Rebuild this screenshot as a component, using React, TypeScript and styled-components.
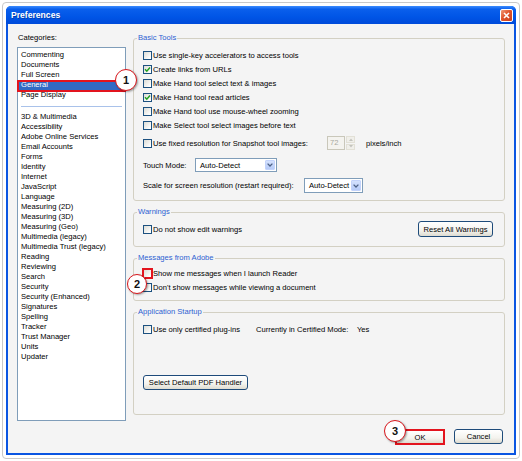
import React from "react";
import styled, { createGlobalStyle } from "styled-components";

const GlobalStyle = createGlobalStyle`
  html, body { margin: 0; padding: 0; background: #ffffff; }
  body {
    font-family: "Liberation Sans", Arial, sans-serif;
    font-size: 7.6px;
    color: #000;
  }
  * { box-sizing: border-box; }
`;

const Outer = styled.div`
  margin: 2px;
  width: 518px;
  height: 457px;
  border: 1px solid #c9c9c9;
  border-radius: 4px;
  padding: 3px;
`;

const Window = styled.div`
  width: 510px;
  height: 449px;
  display: flex;
  flex-direction: column;
  background: #0a55e2;
  border-radius: 5px 5px 0 0;
  overflow: hidden;
`;

const TitleBar = styled.div`
  height: 18px;
  flex: none;
  display: flex;
  align-items: center;
  justify-content: space-between;
  padding: 0 3px 0 5px;
  background: linear-gradient(#3b8cff 0%, #0a5fec 18%, #0055e6 60%, #004bda 100%);
  color: #fff;
  font-weight: bold;
  font-size: 8.6px;
  text-shadow: 1px 1px 0 rgba(0, 0, 0, 0.25);
`;

const CloseButton = styled.div`
  width: 13px;
  height: 13px;
  border: 1px solid #fff;
  border-radius: 2px;
  background: linear-gradient(135deg, #f09a7a 0%, #e0542c 45%, #c8401f 100%);
  display: flex;
  align-items: center;
  justify-content: center;
`;

const Body = styled.div`
  flex: 1;
  margin: 0 2px 2px;
  background: #f4f4f4;
  padding: 9px 9px 0;
  display: flex;
  flex-direction: column;
  position: relative;
`;

const Main = styled.div`
  height: 388px;
  display: flex;
  gap: 7px;
`;

const LeftCol = styled.div`
  width: 109px;
  display: flex;
  flex-direction: column;
`;

const Caption = styled.div`
  height: 10px;
  line-height: 10px;
  padding-left: 1px;
`;

const List = styled.div`
  margin-top: 4px;
  flex: 1;
  border: 1px solid #7f9db9;
  background: #fff;
  padding-top: 2px;
`;

const Item = styled.div<{ $selected?: boolean }>`
  position: relative;
  height: 10px;
  line-height: 10px;
  padding-left: 3px;
  white-space: nowrap;
  background: ${(p) => (p.$selected ? "#316ac5" : "transparent")};
  color: ${(p) => (p.$selected ? "#fff" : "#000")};
`;

const ItemMark = styled.span`
  position: absolute;
  top: 0;
  left: -1px;
  right: -1px;
  bottom: -2px;
  border: 2px solid #e3141e;
`;

const Separator = styled.div`
  height: 12px;
  display: flex;
  align-items: center;
  padding: 0 3px;
  &::after {
    content: "";
    flex: 1;
    height: 1px;
    background: #a9c2ea;
  }
`;

const RightCol = styled.div`
  flex: 1;
  display: flex;
  flex-direction: column;
  gap: 11px;
  padding-top: 5px;
`;

const Group = styled.div<{ $h: number; $pad: string }>`
  position: relative;
  height: ${(p) => p.$h}px;
  border: 1px solid #d3d0c3;
  border-radius: 3px;
  padding: ${(p) => p.$pad};
  display: flex;
  flex-direction: column;
`;

const Legend = styled.span`
  position: absolute;
  top: -6px;
  left: 3px;
  padding: 0 1px;
  line-height: 10px;
  background: #f4f4f4;
  color: #2c5fd2;
`;

const Row = styled.div<{ $h?: number; $mt?: number }>`
  display: flex;
  align-items: center;
  height: ${(p) => p.$h ?? 14}px;
  margin-top: ${(p) => p.$mt ?? 0}px;
  white-space: nowrap;
`;

const SpreadRow = styled(Row)`
  justify-content: space-between;
`;

const Box = styled.span<{ $mark?: boolean }>`
  width: 9px;
  height: 9px;
  flex: none;
  margin-right: 1px;
  border: 1px solid ${(p) => (p.$mark ? "#e3141e" : "#1c5180")};
  outline: ${(p) => (p.$mark ? "1px solid #e3141e" : "none")};
  background: linear-gradient(135deg, #dcdcd5 0%, #fff 90%);
  display: flex;
  align-items: center;
  justify-content: center;
`;

const FixedLabel = styled.span<{ $w: number }>`
  width: ${(p) => p.$w}px;
  flex: none;
`;

const NumBox = styled.div`
  width: 18px;
  height: 14px;
  border: 1px solid #c9c7ba;
  background: #f4f3ef;
  color: #a8a8a0;
  padding-left: 2px;
  line-height: 12px;
`;

const Spinner = styled.div`
  width: 9px;
  height: 14px;
  display: flex;
  flex-direction: column;
  gap: 1px;
  margin-left: 1px;
`;

const SpinHalf = styled.div`
  flex: 1;
  background: #f0efea;
  border: 1px solid #e2e0d6;
  display: flex;
  align-items: center;
  justify-content: center;
`;

const Unit = styled.span`
  margin-left: 11px;
`;

const Select = styled.div<{ $w: number; $h?: number }>`
  width: ${(p) => p.$w}px;
  height: ${(p) => p.$h ?? 14}px;
  border: 1px solid #7f9db9;
  background: #fff;
  display: flex;
  align-items: center;
  padding: 1px;
`;

const SelectText = styled.span`
  flex: 1;
  padding-left: 3px;
`;

const DropButton = styled.span`
  width: 10px;
  height: 100%;
  border-radius: 1px;
  background: linear-gradient(#d4e1fd, #b6cbf8);
  border: 1px solid #c3d3fb;
  display: flex;
  align-items: center;
  justify-content: center;
`;

const Button = styled.div<{ $w: number; $h?: number; $mark?: boolean }>`
  width: ${(p) => p.$w}px;
  height: ${(p) => p.$h ?? 15}px;
  flex: none;
  display: flex;
  align-items: center;
  justify-content: center;
  border: ${(p) => (p.$mark ? "2px solid #e3141e" : "1px solid #1e4b7a")};
  border-radius: ${(p) => (p.$mark ? "0" : "3px")};
  background: linear-gradient(#ffffff 0%, #f4f3ee 60%, #dedbd0 100%);
  white-space: nowrap;
`;

const PushBottom = styled.div`
  margin-top: auto;
`;

const Footer = styled.div`
  margin-top: 8px;
  display: flex;
  justify-content: flex-end;
  gap: 9px;
  padding-right: 2px;
`;

const Badge = styled.div<{ $x: number; $y: number; $s: number }>`
  position: absolute;
  left: ${(p) => p.$x}px;
  top: ${(p) => p.$y}px;
  width: ${(p) => p.$s}px;
  height: ${(p) => p.$s}px;
  border-radius: 50%;
  border: 1.5px solid #d9151b;
  background: #fff;
  box-shadow: 1px 1px 2px rgba(0, 0, 0, 0.35);
  display: flex;
  align-items: center;
  justify-content: center;
  font-family: "Liberation Sans", Arial, sans-serif;
  font-weight: bold;
  font-size: 11px;
  color: #111;
`;

const Check = () => (
  <svg width="7" height="7" viewBox="0 0 7 7">
    <path d="M1 3.2 L2.8 5.2 L6 1.4" fill="none" stroke="#21a121" strokeWidth="1.5" />
  </svg>
);

const Chevron = () => (
  <svg width="6" height="4" viewBox="0 0 6 4">
    <path d="M0.6 0.6 L3 3 L5.4 0.6" fill="none" stroke="#4d6185" strokeWidth="1.3" />
  </svg>
);

const Tri = ({ up }: { up?: boolean }) => (
  <svg width="4" height="3" viewBox="0 0 4 3">
    <path d={up ? "M0 3 L2 0.6 L4 3 Z" : "M0 0 L2 2.4 L4 0 Z"} fill="#c3c3bd" />
  </svg>
);

const CheckItem = ({ label, checked, mark }: { label: string; checked?: boolean; mark?: boolean }) => (
  <Row>
    <Box $mark={mark}>{checked && <Check />}</Box>
    <span>{label}</span>
  </Row>
);

const topItems = ["Commenting", "Documents", "Full Screen", "General", "Page Display"];
const moreItems = [
  "3D & Multimedia",
  "Accessibility",
  "Adobe Online Services",
  "Email Accounts",
  "Forms",
  "Identity",
  "Internet",
  "JavaScript",
  "Language",
  "Measuring (2D)",
  "Measuring (3D)",
  "Measuring (Geo)",
  "Multimedia (legacy)",
  "Multimedia Trust (legacy)",
  "Reading",
  "Reviewing",
  "Search",
  "Security",
  "Security (Enhanced)",
  "Signatures",
  "Spelling",
  "Tracker",
  "Trust Manager",
  "Units",
  "Updater",
];

export default function App() {
  return (
    <>
      <GlobalStyle />
      <Outer>
        <Window>
          <TitleBar>
            <span>Preferences</span>
            <CloseButton>
              <svg width="7" height="7" viewBox="0 0 7 7">
                <path d="M1 1 L6 6 M6 1 L1 6" stroke="#fff" strokeWidth="1.6" />
              </svg>
            </CloseButton>
          </TitleBar>
          <Body>
            <Main>
              <LeftCol>
                <Caption>Categories:</Caption>
                <List>
                  {topItems.map((t) => (
                    <Item key={t} $selected={t === "General"}>
                      {t}
                      {t === "General" && <ItemMark />}
                    </Item>
                  ))}
                  <Separator />
                  {moreItems.map((t) => (
                    <Item key={t}>{t}</Item>
                  ))}
                </List>
              </LeftCol>
              <RightCol>
                <Group $h={163} $pad="9px 9px 0 9px">
                  <Legend>Basic Tools</Legend>
                  <CheckItem label="Use single-key accelerators to access tools" />
                  <CheckItem label="Create links from URLs" checked />
                  <CheckItem label="Make Hand tool select text & images" />
                  <CheckItem label="Make Hand tool read articles" checked />
                  <CheckItem label="Make Hand tool use mouse-wheel zooming" />
                  <CheckItem label="Make Select tool select images before text" />
                  <Row $mt={4}>
                    <Box />
                    <FixedLabel $w={174}>Use fixed resolution for Snapshot tool images:</FixedLabel>
                    <NumBox>72</NumBox>
                    <Spinner>
                      <SpinHalf>
                        <Tri up />
                      </SpinHalf>
                      <SpinHalf>
                        <Tri />
                      </SpinHalf>
                    </Spinner>
                    <Unit>pixels/inch</Unit>
                  </Row>
                  <Row $mt={8}>
                    <FixedLabel $w={52}>Touch Mode:</FixedLabel>
                    <Select $w={82}>
                      <SelectText>Auto-Detect</SelectText>
                      <DropButton>
                        <Chevron />
                      </DropButton>
                    </Select>
                  </Row>
                  <Row $mt={6} $h={15}>
                    <FixedLabel $w={161}>Scale for screen resolution (restart required):</FixedLabel>
                    <Select $w={59} $h={15}>
                      <SelectText>Auto-Detect</SelectText>
                      <DropButton>
                        <Chevron />
                      </DropButton>
                    </Select>
                  </Row>
                </Group>
                <Group $h={35} $pad="8px 11px 0 9px">
                  <Legend>Warnings</Legend>
                  <SpreadRow $h={16}>
                    <Row>
                      <Box />
                      <span>Do not show edit warnings</span>
                    </Row>
                    <Button $w={75} $h={16}>Reset All Warnings</Button>
                  </SpreadRow>
                </Group>
                <Group $h={43} $pad="7px 9px 0 9px">
                  <Legend>Messages from Adobe</Legend>
                  <CheckItem label="Show me messages when I launch Reader" mark />
                  <CheckItem label="Don't show messages while viewing a document" />
                </Group>
                <Group $h={103} $pad="9px 9px 24px 9px">
                  <Legend>Application Startup</Legend>
                  <Row>
                    <Box />
                    <FixedLabel $w={103}>Use only certified plug-ins</FixedLabel>
                    <FixedLabel $w={101}>Currently in Certified Mode:</FixedLabel>
                    <span>Yes</span>
                  </Row>
                  <PushBottom>
                    <Button $w={105}>Select Default PDF Handler</Button>
                  </PushBottom>
                </Group>
              </RightCol>
            </Main>
            <Footer>
              <Button $w={50} $h={16} $mark>
                OK
              </Button>
              <Button $w={49}>Cancel</Button>
            </Footer>
            <Badge $x={107} $y={45} $s={22}>
              1
            </Badge>
            <Badge $x={119} $y={250} $s={20}>
              2
            </Badge>
            <Badge $x={376} $y={396} $s={22}>
              3
            </Badge>
          </Body>
        </Window>
      </Outer>
    </>
  );
}
